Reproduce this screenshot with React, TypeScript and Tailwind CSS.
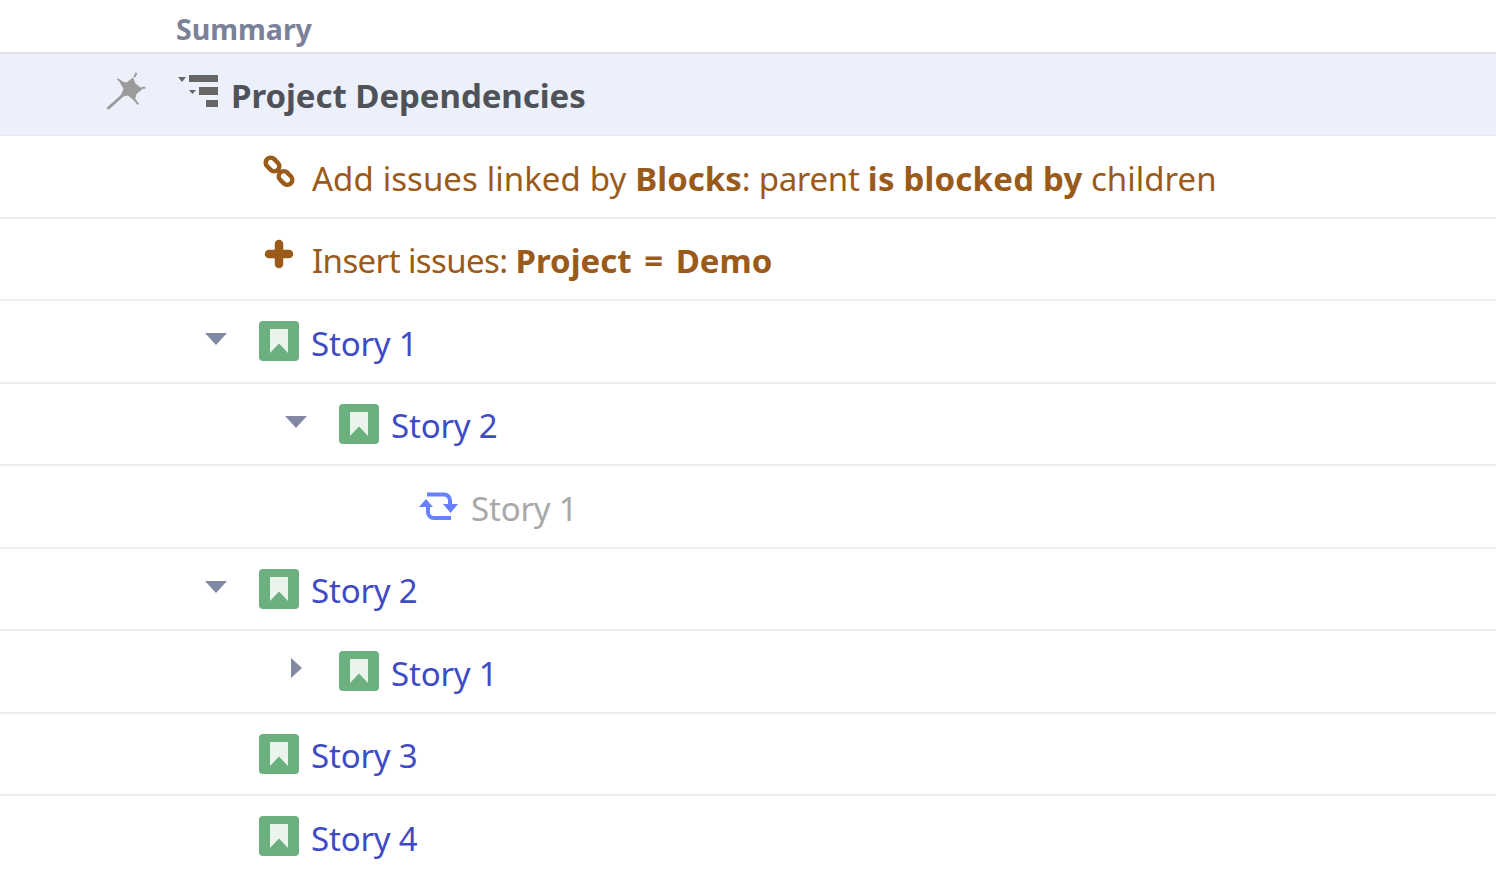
import { ReactNode } from 'react';

const font = { sans: 'font-["Noto_Sans",sans-serif]' };

function StoryIcon() {
	return (
		<svg width="40" height="40" viewBox="0 0 40 40" className="shrink-0">
			<rect width="40" height="40" rx="4" fill="#6cb07f" />
			<path d="M11 8h18v24l-9-9.500-9 9.500z" fill="#ebf3ed" />
		</svg>
	);
}

function Caret({ open }: { open: boolean }) {
	return open ? (
		<svg width="22" height="12" viewBox="0 0 22 12" className="translate-y-[1px]">
			<path d="M0 0h22L11 12z" fill="#8189a3" />
		</svg>
	) : (
		<svg width="12" height="20" viewBox="0 0 12 20">
			<path d="M1 0l11 10L1 20z" fill="#8189a3" />
		</svg>
	);
}

function Row({ children, className = '' }: { children: ReactNode; className?: string }) {
	return (
		<div className={'flex h-[82.5px] items-center border-b-2 border-[#ededed] ' + className}>{children}</div>
	);
}

function StoryRow({ title, indent, caret }: { title: string; indent: 0 | 1; caret?: 'open' | 'closed' }) {
	return (
		<Row className={indent === 0 ? 'pl-[205px]' : 'pl-[285px]'}>
			<div className="flex w-[54px] -translate-y-[3px] items-center">
				{caret && (
					<div className="flex w-[22px] justify-center">
						<Caret open={caret === 'open'} />
					</div>
				)}
			</div>
			<StoryIcon />
			<span className="mt-[4px] ml-[12px] text-[33px] tracking-[-0.2px] text-[#3f4bc4]">{title}</span>
		</Row>
	);
}

export default function App() {
	return (
		<div className={'h-[877px] w-[1496px] overflow-hidden bg-white ' + font.sans}>
			<div className="flex h-[54px] items-center border-b-2 border-[#dfe1e6] pt-[6px] pl-[176px]">
				<span className="text-[28.5px] font-bold text-[#7a8199]">Summary</span>
			</div>
			<div className="flex h-[82px] items-center border-b border-[#e6e9f2] bg-[#ebf0fa] pl-[106px]">
				{/* wand */}
				<svg width="40" height="38" viewBox="0 0 40 38" className="shrink-0 -translate-y-[4px]">
					<path d="M2.500 36L17 23" stroke="#9b9b9b" strokeWidth="3" strokeLinecap="round" />
					<path d="M13 9l7.500 1.500L27 5.500l2.500 6 7 5.500-6 5-2 7-6.500-5.500L14 25l3.500-8z" fill="#9b9b9b" />
					<path
						d="M11.500 7l5 3.500M30.500 1l-2.300 4.300M35.500 15.700h3.800M28.300 27.300l4 5"
						stroke="#9b9b9b"
						strokeWidth="2"
					/>
				</svg>
				{/* hierarchy */}
				<svg width="40" height="34" viewBox="0 0 40 34" className="ml-[32px] shrink-0 -translate-y-[3px]">
					<path d="M0 2h8l-4 5z" fill="#666" />
					<path d="M11 0h29v7H11z" fill="#666" />
					<path d="M11 15h7l-3.500 4z" fill="#666" />
					<path d="M21 12h19v8H21z" fill="#666" />
					<path d="M28 25h12v7H28z" fill="#666" />
				</svg>
				<span className="mt-[2px] ml-[13px] text-[33px] font-bold tracking-[-0.05px] text-[#505259]">
					Project Dependencies
				</span>
			</div>
			<Row className="pl-[262px] text-[33px] text-[#9a5a1a]">
				<svg width="34" height="34" viewBox="0 0 34 34" className="shrink-0 -translate-y-[5px]">
					<g fill="none" stroke="#9a5a1a" strokeWidth="4.500">
						<rect x="3" y="5.500" width="15" height="10" rx="5" transform="rotate(45 10.500 10.500)" />
						<rect x="16" y="19" width="15" height="10" rx="5" transform="rotate(45 23.500 24)" />
					</g>
				</svg>
				<span className="mt-[4px] ml-[16px]">
					<span className="[word-spacing:0.5px]">Add issues linked by </span>
					<b>Blocks</b>
					<span className="tracking-[-0.3px]">: parent </span>
					<b className="tracking-[0.2px]">is blocked by</b> children
				</span>
			</Row>
			<Row className="pl-[264px] text-[33px] text-[#9a5a1a]">
				<svg width="30" height="30" viewBox="0 0 30 30" className="shrink-0 -translate-y-[5px]">
					<path d="M15 5v20M5 15h20" stroke="#9a5a1a" strokeWidth="8.500" strokeLinecap="round" />
				</svg>
				<span className="mt-[4px] ml-[18px]">
					<span className="tracking-[-0.6px]">Insert issues: </span>
					<b className="[word-spacing:4px]">Project = Demo</b>
				</span>
			</Row>
			<StoryRow title="Story 1" indent={0} caret="open" />
			<StoryRow title="Story 2" indent={1} caret="open" />
			<Row className="pl-[419px]">
				<svg width="40" height="28" viewBox="0 0 40 28" className="shrink-0">
					<g fill="none" stroke="#6680ff" strokeWidth="4">
						<path d="M9 13v7a6 6 0 0 0 6 6h17" />
						<path d="M31 14V8.500a6 6 0 0 0-6-6H8" />
					</g>
					<path d="M0 15l7-8 7 8zM24 12h15l-7.500 9z" fill="#6680ff" />
				</svg>
				<span className="mt-[4px] ml-[12px] text-[33px] tracking-[-0.2px] text-[#a8a8a8]">Story 1</span>
			</Row>
			<StoryRow title="Story 2" indent={0} caret="open" />
			<StoryRow title="Story 1" indent={1} caret="closed" />
			<StoryRow title="Story 3" indent={0} />
			<div className="flex h-[82px] items-center pl-[205px]">
				<div className="w-[54px]" />
				<div className="-translate-y-[1px]">
					<StoryIcon />
				</div>
				<span className="mt-[4px] ml-[12px] text-[33px] tracking-[-0.2px] text-[#3f4bc4]">Story 4</span>
			</div>
		</div>
	);
}
